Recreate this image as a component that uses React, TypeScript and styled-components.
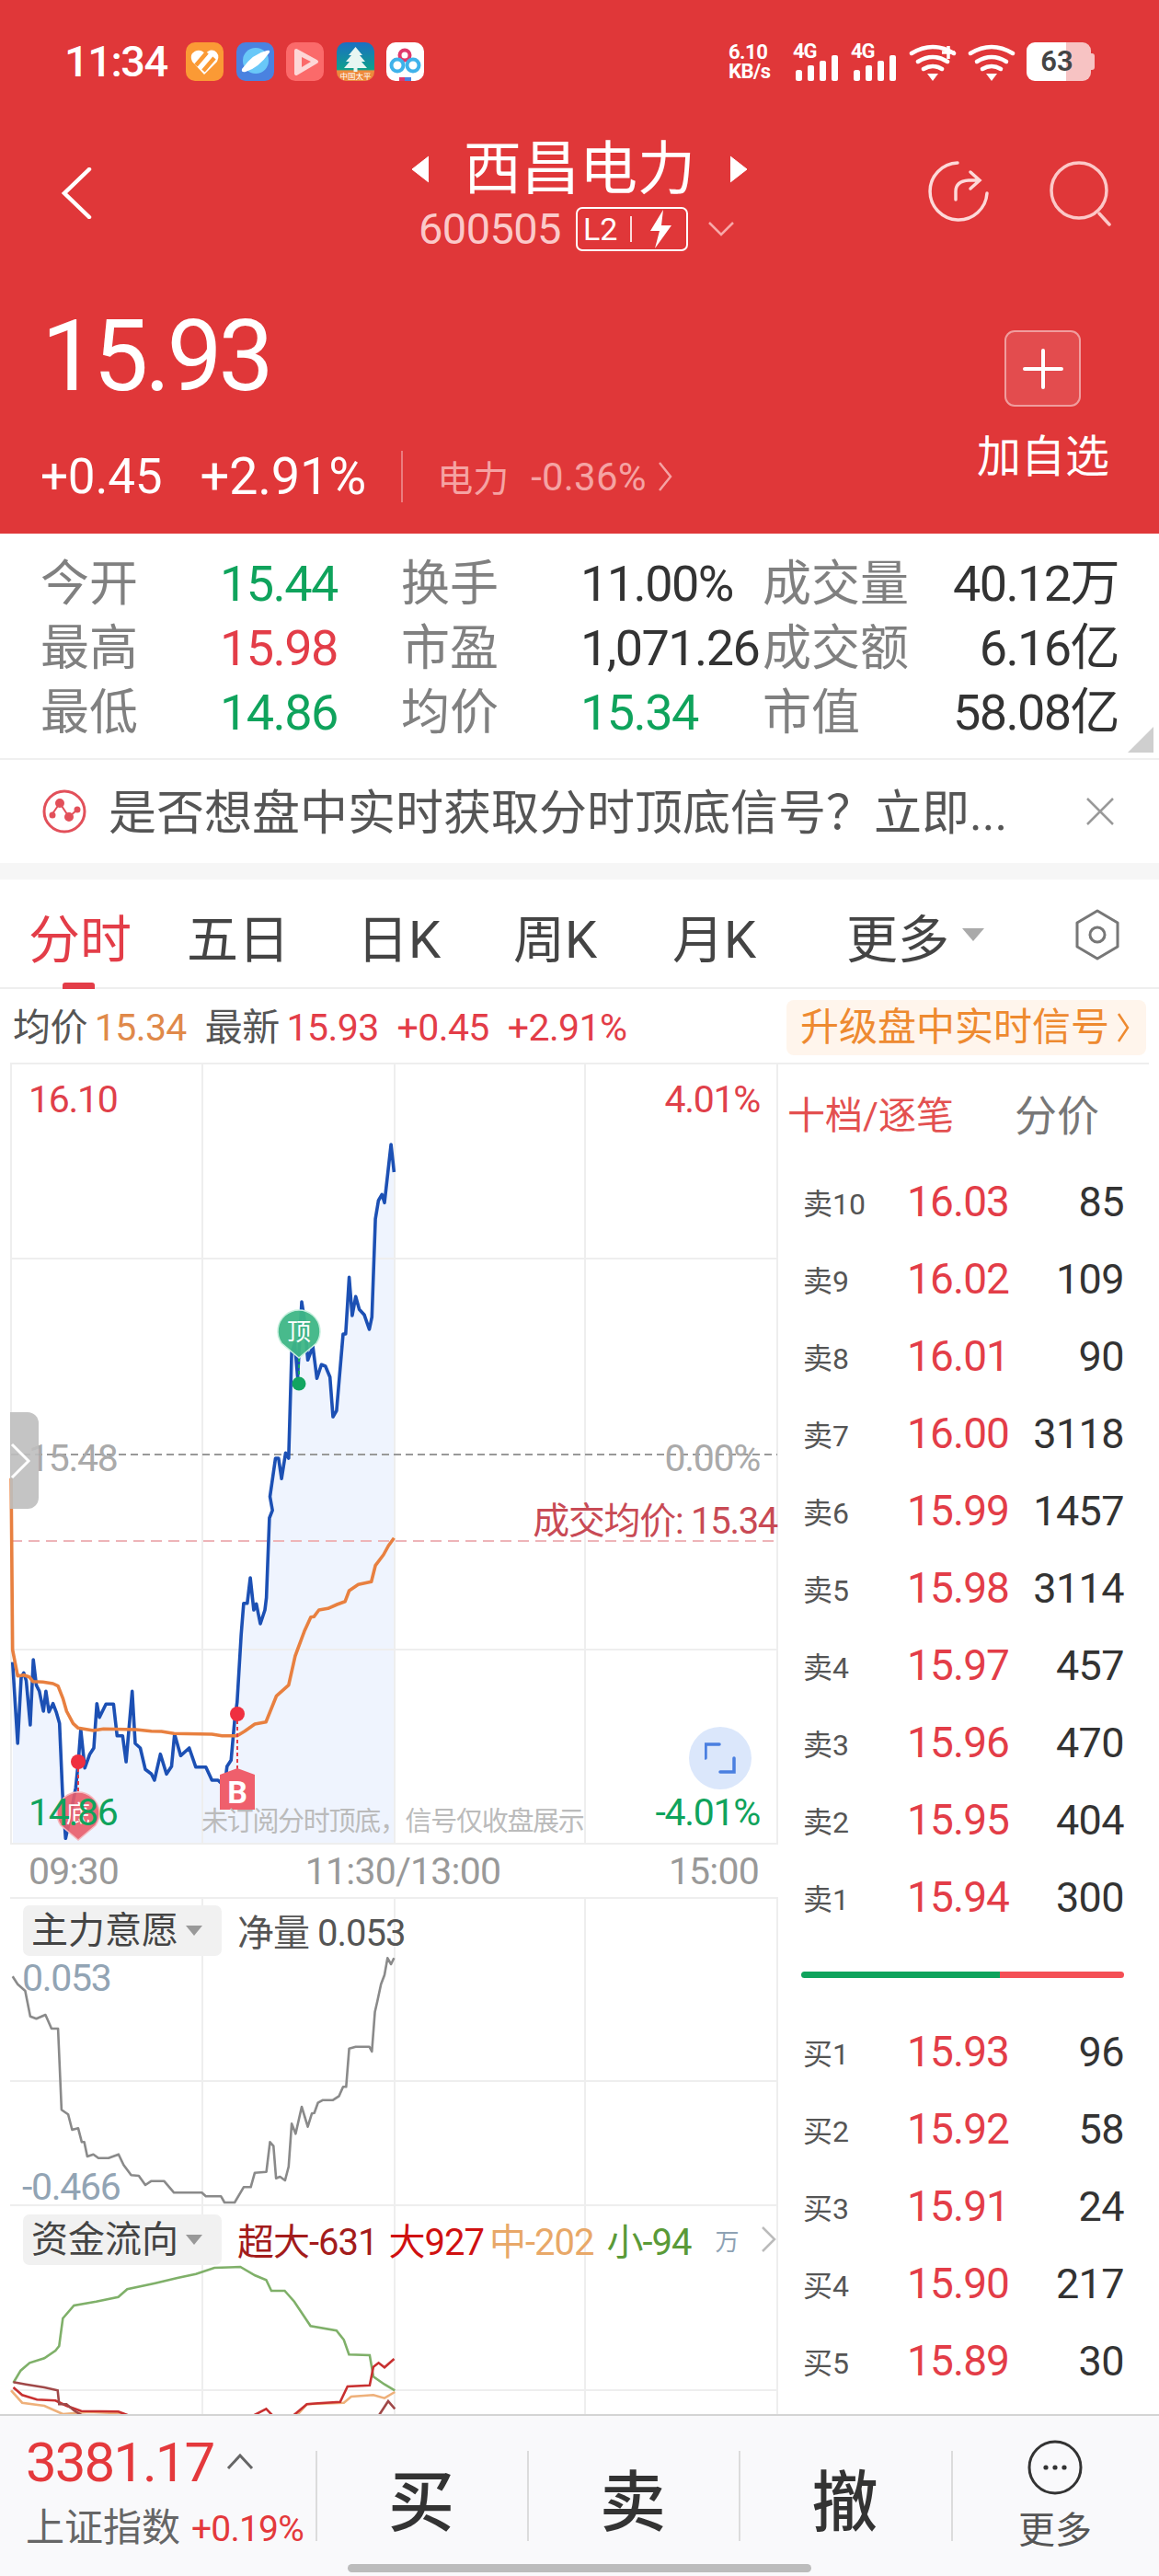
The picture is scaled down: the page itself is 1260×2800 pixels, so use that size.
import React from 'react';
import styled, { createGlobalStyle } from 'styled-components';

const FONT = `Roboto, "Noto Sans CJK SC", sans-serif`;
const RED = '#e33d48';
const GREEN = '#0fa35c';

const GlobalStyle = createGlobalStyle`
  html, body { margin: 0; padding: 0; background: #fff; }
  * { box-sizing: border-box; }
`;

const Page = styled.div`
  width: 1260px;
  height: 2800px;
  overflow: hidden;
  background: #fff;
  font-family: ${FONT};
`;

/* ---------- red header ---------- */
const Header = styled.header`
  height: 580px;
  background: #e03739;
  color: #fff;
`;

const StatusBar = styled.div`
  height: 130px;
  padding: 46px 74px 0 70px;
  display: flex;
  align-items: flex-start;
`;

const Clock = styled.div`
  width: 132px;
  font-size: 47px;
  line-height: 42px;
  letter-spacing: -1.5px;
  font-weight: 500;
`;

const AppIcons = styled.div`
  display: flex;
  gap: 13.5px;
`;

const AppIcon = styled.div<{ $bg: string }>`
  width: 41px;
  height: 42px;
  border-radius: 10px;
  overflow: hidden;
  background: ${(p) => p.$bg};
  svg { display: block; }
`;

const StatusRight = styled.div`
  margin-left: auto;
  display: flex;
  align-items: flex-start;
`;

const NetSpeed = styled.div`
  width: 70px;
  font-size: 22px;
  line-height: 21px;
  font-weight: 700;
  letter-spacing: -0.5px;
`;

const SignalGroup = styled.div`
  position: relative;
  width: 63px;
  height: 42px;
  svg { display: block; }
`;

const NetType = styled.span`
  position: absolute;
  left: 0;
  top: 0;
  font-size: 22px;
  line-height: 20px;
  font-weight: 700;
  letter-spacing: -1px;
`;

const Battery = styled.div`
  width: 70px;
  height: 42px;
  border-radius: 9px;
  background: linear-gradient(90deg, #fff 0 62%, #f7c3c3 62% 100%);
  color: #444;
  font-size: 31px;
  line-height: 42px;
  font-weight: 600;
  text-align: center;
  padding-right: 4px;
  position: relative;
  &::after {
    content: '';
    position: absolute;
    right: -4px;
    top: 12px;
    width: 4px;
    height: 18px;
    border-radius: 0 3px 3px 0;
    background: #f7c3c3;
  }
`;

const NavRow = styled.div`
  height: 170px;
  padding-top: 19px;
  display: grid;
  grid-template-columns: 1fr auto 1fr;
`;

const NavLeft = styled.div`
  padding: 33px 0 0 66px;
`;

const NavRight = styled.div`
  padding: 25px 48px 0 0;
  display: flex;
  justify-content: flex-end;
  gap: 63px;
  align-items: flex-start;
`;

const NavCenter = styled.div`
  display: flex;
  flex-direction: column;
  align-items: center;
`;

const TitleRow = styled.div`
  display: flex;
  align-items: center;
  gap: 38px;
  height: 70px;
`;

const Title = styled.div`
  font-size: 63px;
  line-height: 70px;
`;

const SubRow = styled.div`
  margin: 6px 7px 0 0;
  display: flex;
  align-items: center;
  height: 48px;
`;

const Code = styled.div`
  font-size: 47px;
  line-height: 48px;
  letter-spacing: -0.6px;
  color: #fbc9c9;
`;

const Badge = styled.div`
  margin-left: 16px;
  width: 122px;
  height: 48px;
  border: 2px solid #fff;
  border-radius: 7px;
  display: flex;
  align-items: center;
  padding-left: 6px;
  font-size: 34px;
  line-height: 1;
`;

const BadgeRule = styled.span`
  width: 2px;
  height: 28px;
  margin: 0 18px 0 14px;
  background: #fbdcdc;
`;

const QuoteRow = styled.div`
  height: 280px;
  padding: 0 54px 0 44px;
  display: flex;
  justify-content: space-between;
`;

const Price = styled.div`
  margin: 34px 0 0 1px;
  font-size: 107px;
  line-height: 107px;
  letter-spacing: -4px;
`;

const ChangeRow = styled.div`
  margin-top: 47px;
  height: 60px;
  display: flex;
  align-items: center;
`;

const Change = styled.span<{ $size: number }>`
  font-size: ${(p) => p.$size}px;
  line-height: 60px;
  margin-right: 41px;
  letter-spacing: -0.2px;
`;

const ChangeRule = styled.span`
  width: 2px;
  height: 56px;
  background: rgba(255, 255, 255, 0.35);
  margin: 0 37px 0 -3px;
`;

const Sector = styled.span`
  color: #f5a3a3;
  font-size: 39px;
  margin-right: 24px;
  margin-bottom: 2px;
`;

const SectorPct = styled.span`
  color: #f5a3a3;
  font-size: 42px;
  letter-spacing: 0.2px;
  margin-right: 12px;
`;

const AddColumn = styled.div`
  display: flex;
  flex-direction: column;
  align-items: center;
  padding-top: 59px;
`;

const AddButton = styled.div`
  width: 83px;
  height: 83px;
  border-radius: 11px;
  background: rgba(255, 255, 255, 0.11);
  border: 2px solid rgba(255, 255, 255, 0.45);
  display: flex;
  align-items: center;
  justify-content: center;
`;

const AddLabel = styled.div`
  margin-top: 25px;
  font-size: 48px;
  line-height: 60px;
`;

/* ---------- stats ---------- */
const Stats = styled.section`
  position: relative;
  height: 246px;
  padding: 20px 44px 0 44px;
  border-bottom: 2px solid #f0f0f0;
  display: grid;
  grid-template-columns: 195px 197px 195px 198px 170px 1fr;
  grid-auto-rows: 70px;
  align-items: center;
`;

const StatLabel = styled.div`
  font-size: 53px;
  line-height: 70px;
  color: #808080;
  white-space: nowrap;
`;

const StatValue = styled.div<{ $color?: string; $right?: boolean }>`
  font-size: 54px;
  line-height: 70px;
  letter-spacing: -1.6px;
  white-space: nowrap;
  color: ${(p) => p.$color || '#333'};
  text-align: ${(p) => (p.$right ? 'right' : 'left')};
`;

const CornerMark = styled.div`
  position: absolute;
  right: 6px;
  bottom: 6px;
  width: 0;
  height: 0;
  border-style: solid;
  border-width: 0 0 28px 28px;
  border-color: transparent transparent #cfcfcf transparent;
`;

/* ---------- banner ---------- */
const Banner = styled.section`
  height: 112px;
  padding: 0 46px;
  display: flex;
  align-items: center;
`;

const BannerText = styled.div`
  margin: 5px 0 0 24px;
  font-size: 52px;
  line-height: 60px;
  color: #555;
  white-space: nowrap;
`;

const BannerClose = styled.div`
  margin-left: auto;
  margin-right: 2px;
  display: flex;
`;

const Band = styled.div`
  height: 18px;
  background: #f6f6f6;
`;

/* ---------- tabs ---------- */
const Tabs = styled.nav`
  height: 119px;
  padding-left: 31px;
  padding-right: 42px;
  border-bottom: 2px solid #eee;
  display: grid;
  grid-template-columns: 172px 185px 170px 173px 189px 1fr auto;
  align-items: center;
`;

const Tab = styled.div<{ $active?: boolean }>`
  position: relative;
  font-size: 56px;
  height: 119px;
  padding-top: 1px;
  color: ${(p) => (p.$active ? RED : '#444')};
  display: flex;
  align-items: center;
  &::after {
    content: '';
    display: ${(p) => (p.$active ? 'block' : 'none')};
    position: absolute;
    left: 37px;
    bottom: 0;
    width: 35px;
    height: 7px;
    border-radius: 3px 3px 0 0;
    background: ${RED};
  }
`;

const TabCaret = styled.span`
  margin-left: 14px;
  width: 0;
  height: 0;
  border-style: solid;
  border-width: 14px 12px 0 12px;
  border-color: #aaa transparent transparent transparent;
`;

/* ---------- info row ---------- */
const InfoRow = styled.div`
  height: 80px;
  padding: 4px 14px 0 14px;
  display: flex;
  align-items: center;
  gap: 20px;
`;

const InfoPair = styled.div`
  display: flex;
  gap: 8px;
`;

const InfoText = styled.span<{ $color?: string }>`
  font-size: 41px;
  line-height: 58px;
  letter-spacing: -0.6px;
  color: ${(p) => p.$color || '#555'};
`;

const UpgradePill = styled.div`
  margin-left: auto;
  width: 391px;
  height: 60px;
  border-radius: 8px;
  background: #fff5ec;
  color: #ee8a30;
  font-size: 42px;
  line-height: 60px;
  padding-left: 15px;
  display: flex;
  align-items: center;
  gap: 8px;
  white-space: nowrap;
`;

/* ---------- chart + order book ---------- */
const TopRule = styled.div`
  height: 2px;
  margin: 0 11px;
  background: #eee;
`;

const Body = styled.div`
  height: 1467px;
  display: flex;
  overflow: hidden;
`;

const ChartColumn = styled.div`
  width: 848px;
  flex: none;
`;

const ChartPane = styled.div<{ $h: number }>`
  position: relative;
  height: ${(p) => p.$h}px;
  overflow: hidden;
  > svg { position: absolute; inset: 0; display: block; }
`;

const AxisLabel = styled.div<{ $x?: number; $rx?: number; $y: number; $color: string; $size?: number }>`
  position: absolute;
  ${(p) => (p.$x !== undefined ? `left: ${p.$x}px;` : `right: ${p.$rx}px;`)}
  top: ${(p) => p.$y}px;
  transform: translateY(-50%);
  font-size: ${(p) => p.$size || 41}px;
  line-height: 1;
  letter-spacing: -1.3px;
  white-space: nowrap;
  color: ${(p) => p.$color};
`;

const Handle = styled.div`
  position: absolute;
  left: 11px;
  top: 378px;
  width: 31px;
  height: 105px;
  border-radius: 0 12px 12px 0;
  background: rgba(190, 190, 190, 0.9);
  display: flex;
  align-items: center;
`;

const ExpandButton = styled.div`
  position: absolute;
  left: 749px;
  top: 720px;
  width: 68px;
  height: 68px;
  border-radius: 50%;
  background: #dbe7fb;
  display: flex;
  align-items: center;
  justify-content: center;
`;

const TimeAxis = styled.div`
  height: 56px;
  padding: 0 23px 0 31px;
  display: flex;
  justify-content: space-between;
  align-items: center;
  font-size: 41px;
  letter-spacing: -0.8px;
  color: #999;
`;

const MidTime = styled.span`
  margin-left: 20px;
`;

const PaneHead = styled.div`
  position: relative;
  display: flex;
  align-items: center;
  padding: 7px 0 0 25px;
  white-space: nowrap;
`;

const PaneTag = styled.div`
  width: 216px;
  height: 55px;
  border-radius: 7px;
  background: #f1f1f1;
  color: #444;
  font-size: 40px;
  line-height: 55px;
  padding-left: 9px;
  display: flex;
  align-items: center;
  flex: none;
`;

const TagCaret = styled.span`
  margin-left: 8px;
  width: 0;
  height: 0;
  border-style: solid;
  border-width: 11px 9px 0 9px;
  border-color: #999 transparent transparent transparent;
`;

const PaneValue = styled.span<{ $color: string; $gap?: number }>`
  margin-left: ${(p) => p.$gap ?? 0}px;
  font-size: 40px;
  letter-spacing: -1px;
  color: ${(p) => p.$color};
`;

const UnitMark = styled.span`
  margin-left: 26px;
  font-size: 26px;
  color: #8ea2b4;
`;

const OrderBook = styled.aside`
  flex: 1;
  padding-right: 38px;
`;

const BookHead = styled.div`
  height: 107px;
  padding: 4px 0 0 8px;
  display: flex;
  align-items: center;
`;

const BookTabOn = styled.div`
  font-size: 41px;
  line-height: 54px;
  color: #e35050;
  width: 247px;
  white-space: nowrap;
`;

const BookTabOff = styled.div`
  font-size: 46px;
  line-height: 54px;
  color: #777;
`;

const BookRow = styled.div`
  height: 84px;
  padding-left: 25px;
  display: grid;
  grid-template-columns: 113px 1fr auto;
  align-items: center;
`;

const BookLevel = styled.div`
  font-size: 32px;
  color: #555;
  white-space: nowrap;
`;

const BookPrice = styled.div`
  font-size: 46px;
  letter-spacing: -0.9px;
  color: ${RED};
`;

const BookVol = styled.div`
  font-size: 45px;
  letter-spacing: -0.6px;
  color: #333;
  text-align: right;
`;

const BalanceBar = styled.div`
  margin: 39px 0 38px 23px;
  height: 7px;
  border-radius: 4px;
  background: linear-gradient(90deg, ${GREEN} 0 61.5%, #f44f55 61.5% 100%);
`;

/* ---------- bottom bar ---------- */
const BottomBar = styled.footer`
  position: relative;
  height: 176px;
  background: #f9f9fb;
  border-top: 2px solid #d4d4d4;
  display: flex;
`;

const IndexBlock = styled.div`
  width: 343px;
  padding: 20px 0 0 28px;
  flex: none;
`;

const IndexTop = styled.div`
  display: flex;
  align-items: center;
  height: 60px;
  color: #e4393c;
  font-size: 60px;
  letter-spacing: -2px;
`;

const IndexBottom = styled.div`
  display: flex;
  align-items: baseline;
  margin-top: 17px;
  white-space: nowrap;
`;

const IndexName = styled.span`
  font-size: 42px;
  line-height: 50px;
  color: #666;
`;

const IndexPct = styled.span`
  margin-left: 12px;
  font-size: 39px;
  letter-spacing: -0.8px;
  color: #e4393c;
`;

const Action = styled.div<{ $w: number }>`
  position: relative;
  width: ${(p) => p.$w}px;
  flex: none;
  display: flex;
  flex-direction: column;
  align-items: center;
  justify-content: center;
  height: 174px;
  font-size: 72px;
  font-weight: 500;
  color: #333;
  &::before {
    content: '';
    position: absolute;
    left: 0;
    top: 38px;
    width: 2px;
    height: 98px;
    background: #dcdcdc;
  }
`;

const MoreLabel = styled.div`
  margin-top: 16px;
  font-size: 40px;
  line-height: 46px;
  font-weight: 400;
  color: #555;
`;

const HomeBar = styled.div`
  position: absolute;
  left: 378px;
  bottom: 4px;
  width: 504px;
  height: 9px;
  border-radius: 5px;
  background: #bcbcbc;
`;

/* ---------- chart data (read from the picture) ---------- */
type Pt = [number, number];

const toPts = (data: Pt[], xs: number, y0: number, ys: number): Pt[] =>
  data.map(([x, y]) => [+(x / xs).toFixed(1), +(y0 + y / ys).toFixed(1)]);
const str = (data: Pt[]) => data.map((p) => p.join(',')).join(' ');

const BLUE = [
  ...toPts([[25,470],[35,735],[42,520],[47,505],[52,530],[60,675],[66,462],[72,545],[78,565],[86,630],[91,565],[97,632],[105,605],[112,635],[118,670],[124,900],[130,1045],[136,1000],[150,880],[155,800],[160,690],[168,815],[178,770],[186,750],[192,605],[197,650],[210,607],[225,607],[232,710],[243,710],[250,795],[262,565],[268,735],[278,750],[288,820],[300,835],[306,855],[318,770],[330,835],[340,810],[346,705],[358,775],[375,750],[388,812],[408,812],[420,855],[432,855],[445,875],[450,810],[458,790],[465,660],[470,600],[478,380],[483,278],[490,278],[496,195],[503,300],[508,280],[516,345],[525,300],[528,260]], 1.823, 1650, 3),
  ...toPts([[534,1500],[540,1475],[535,1430],[546,1305],[552,1305],[558,1372],[566,1288],[572,1305],[578,960],[584,930],[590,1040],[598,795],[603,850],[610,985],[620,940],[628,1045],[637,1000],[645,1005],[654,1040],[660,1170],[667,1150],[680,900],[685,900],[692,715],[698,840],[705,778],[712,820],[722,838],[732,885],[737,845],[744,525],[750,465],[757,445],[762,472],[775,282],[781,372]], 1.823, 1150, 3),
];

const ORANGE = toPts([[22,-130],[25,430],[35,515],[47,512],[58,518],[65,533],[85,535],[105,540],[115,548],[125,590],[132,630],[145,670],[155,685],[185,693],[205,688],[270,690],[300,695],[320,696],[345,703],[420,705],[440,710],[470,710],[485,695],[505,672],[527,665],[548,580],[572,545],[585,450],[603,370],[616,323],[622,322],[632,300],[650,295],[668,282],[684,272],[692,237],[710,217],[736,208],[744,155],[760,120],[770,90],[781,65]], 1.823, 1650, 3);

const WILL = toPts([[25,295],[35,320],[50,342],[60,425],[72,433],[90,420],[102,465],[115,465],[122,730],[135,745],[143,795],[155,790],[162,835],[167,835],[173,882],[185,875],[195,887],[215,887],[235,875],[245,910],[260,943],[275,945],[288,975],[300,962],[325,962],[345,1000],[400,1000],[408,1012],[438,1012],[445,1032],[465,1032],[483,982],[497,982],[505,935],[528,932],[535,835],[542,848],[547,953],[555,948],[565,960],[572,915],[578,775],[586,808],[598,720],[610,785],[618,742],[623,740],[630,707],[640,698],[660,698],[672,685],[680,655],[686,655],[692,530],[705,524],[732,524],[737,540],[743,410],[748,375],[755,320],[762,290],[768,235],[775,255],[781,235]], 1.823, 2050, 3);

const FLOW_GREEN = toPts([[18,420],[28,380],[40,355],[60,340],[75,315],[80,300],[85,210],[100,168],[130,155],[160,140],[172,115],[210,95],[240,78],[265,65],[290,45],[325,42],[345,70],[360,85],[367,120],[385,120],[398,155],[420,235],[455,250],[465,280],[472,328],[500,330],[505,400],[520,425],[534,445]], 1.244, 2450, 3);
const FLOW_DARK = toPts([[18,418],[35,425],[60,435],[78,445],[80,490],[90,490],[100,510],[120,540]], 1.244, 2450, 3);
const FLOW_DARK_R = toPts([[510,535],[525,480],[534,505]], 1.244, 2450, 3);
const FLOW_RED = toPts([[18,435],[30,460],[50,475],[75,478],[90,495],[110,512],[160,514],[178,530]], 1.244, 2450, 3);
const FLOW_RED_R = toPts([[340,530],[360,505],[370,530],[395,530],[415,490],[430,487],[460,482],[470,432],[500,428],[505,368],[512,355],[520,370],[533,342]], 1.244, 2450, 3);
const FLOW_ORANGE = toPts([[15,445],[30,485],[60,495],[85,522],[120,515],[165,520],[180,535]], 1.244, 2450, 3);
const FLOW_ORANGE_R = toPts([[400,530],[415,490],[465,485],[475,465],[505,460],[520,470],[534,450]], 1.244, 2450, 3);

const GRID = '#eeeeee';
const VERT = [12, 220, 429, 636, 845];

const ASKS: [string, string, string][] = [
  ['卖10', '16.03', '85'],
  ['卖9', '16.02', '109'],
  ['卖8', '16.01', '90'],
  ['卖7', '16.00', '3118'],
  ['卖6', '15.99', '1457'],
  ['卖5', '15.98', '3114'],
  ['卖4', '15.97', '457'],
  ['卖3', '15.96', '470'],
  ['卖2', '15.95', '404'],
  ['卖1', '15.94', '300'],
];

const BIDS: [string, string, string][] = [
  ['买1', '15.93', '96'],
  ['买2', '15.92', '58'],
  ['买3', '15.91', '24'],
  ['买4', '15.90', '217'],
  ['买5', '15.89', '30'],
];

/* ---------- small drawings ---------- */
function Signal() {
  return (
    <SignalGroup>
      <NetType>4G</NetType>
      <svg width="63" height="42" viewBox="0 0 63 42">
        <rect x="3" y="30" width="7" height="12" rx="2.5" fill="#fff" />
        <rect x="16" y="25" width="7" height="17" rx="2" fill="#fff" />
        <rect x="29" y="20" width="7" height="22" rx="2" fill="#fff" />
        <rect x="42" y="14" width="7" height="28" rx="2" fill="#fff" />
      </svg>
    </SignalGroup>
  );
}

function Wifi({ plus }: { plus?: boolean }) {
  return (
    <svg width="64" height="42" viewBox="0 0 64 42" fill="none" stroke="#fff" strokeWidth="4.5" strokeLinecap="round">
      <path d="M3 12 Q26 -2 49 12" />
      <path d="M10 21 Q26 11 42 21" />
      <path d="M16 29 Q26 23 36 29" />
      <path d="M20 34 H32 L26 42 Z" fill="#fff" stroke="none" />
      {plus && <path d="M36 11 H50 M43 4 V18" strokeLinecap="butt" strokeWidth="3.5" />}
    </svg>
  );
}

function Pin({ x, y, fill, stroke, label }: { x: number; y: number; fill: string; stroke: string; label: string }) {
  return (
    <g>
      <path
        d={`M${x} ${y + 28} L${x - 19} ${y + 12} A23 23 0 1 1 ${x + 19} ${y + 12} Z`}
        fill={fill}
        stroke={stroke}
        strokeWidth="1.5"
      />
      <text x={x} y={y + 9} textAnchor="middle" fontSize="26" fill="#fff" fontFamily={FONT}>{label}</text>
    </g>
  );
}

export default function App() {
  return (
    <Page>
      <GlobalStyle />
      <Header>
        <StatusBar>
          <Clock>11:34</Clock>
          <AppIcons>
            <AppIcon $bg="#fb9a35">
              <svg width="41" height="42" viewBox="0 0 41 42" fill="none">
                <path d="M20 35 L7 21 Q3 12 12 9 Q18 8 21 13 Q25 7 31 9 Q38 13 34 21 Z" fill="#fff" />
                <path d="M11 25 L23 11 M19 31 L31 17" stroke="#fb9a35" strokeWidth="4.5" />
              </svg>
            </AppIcon>
            <AppIcon $bg="#4a82e0">
              <svg width="41" height="42" viewBox="0 0 41 42">
                <circle cx="21" cy="20" r="14" fill="#69c8f8" />
                <path d="M6 29 Q5 33 10 32 Q24 28 36 11 Q37 8 33 9 Q18 12 6 29 Z" fill="#fff" />
              </svg>
            </AppIcon>
            <AppIcon $bg="#fb6a6a">
              <svg width="41" height="42" viewBox="0 0 41 42">
                <path d="M11 9 L33 21 L11 34 Z" fill="#fdd7d7" stroke="#fdd7d7" strokeWidth="4" strokeLinejoin="round" />
                <path d="M17 16 L27 21 L17 27 Z" fill="#fb6a6a" />
              </svg>
            </AppIcon>
            <AppIcon $bg="linear-gradient(180deg,#1b6fc4 0%,#0fa08c 70%,#ee8a3c 74%)">
              <svg width="41" height="42" viewBox="0 0 41 42">
                <path d="M20.5 5 L28 14 L25 14 L31 21 L27 21 L33 28 L8 28 L14 21 L10 21 L16 14 L13 14 Z" fill="#e8f6f2" />
                <rect x="18.5" y="27" width="4" height="5" fill="#e8f6f2" />
                <text x="20.5" y="40" textAnchor="middle" fontSize="8.5" fill="#fff" fontFamily={FONT}>中国太平</text>
              </svg>
            </AppIcon>
            <AppIcon $bg="#fff">
              <svg width="41" height="42" viewBox="0 0 41 42" fill="none" strokeWidth="4">
                <circle cx="20" cy="14" r="5.5" stroke="#e0396b" />
                <circle cx="12" cy="25" r="6.5" stroke="#3fb2ea" />
                <circle cx="29" cy="25" r="6.5" stroke="#3fb2ea" />
                <path d="M14 40 H20" stroke="#e0396b" />
                <path d="M20 40 H27" stroke="#4a82e0" />
              </svg>
            </AppIcon>
          </AppIcons>
          <StatusRight>
            <NetSpeed>6.10<br />KB/s</NetSpeed>
            <Signal />
            <Signal />
            <Wifi plus />
            <Wifi />
            <Battery>63</Battery>
          </StatusRight>
        </StatusBar>

        <NavRow>
          <NavLeft>
            <svg width="34" height="56" viewBox="0 0 34 56" fill="none" stroke="#fff" strokeWidth="4.5" strokeLinecap="round">
              <path d="M31 2 L4 28 L31 54" />
            </svg>
          </NavLeft>
          <NavCenter>
            <TitleRow>
              <svg width="20" height="30" viewBox="0 0 20 30"><path d="M20 1 L2 15 L20 29 Z" fill="#fff" stroke="#fff" strokeLinejoin="round" /></svg>
              <Title>西昌电力</Title>
              <svg width="20" height="30" viewBox="0 0 20 30"><path d="M0 1 L18 15 L0 29 Z" fill="#fff" stroke="#fff" strokeLinejoin="round" /></svg>
            </TitleRow>
            <SubRow>
              <Code>600505</Code>
              <Badge>
                L2
                <BadgeRule />
                <svg width="26" height="42" viewBox="0 0 26 42"><path d="M16 0 L2 23 L12 23 L7 42 L25 17 L14 17 Z" fill="#fff" /></svg>
              </Badge>
              <svg style={{ marginLeft: 22 }} width="28" height="16" viewBox="0 0 28 16" fill="none" stroke="#f8a8a8" strokeWidth="2.5">
                <path d="M1 1 L14 14 L27 1" />
              </svg>
            </SubRow>
          </NavCenter>
          <NavRight>
            <svg width="70" height="70" viewBox="0 0 70 70" fill="none" stroke="#fdd9d9" strokeWidth="3.5" strokeLinecap="round">
              <path d="M34 3 A31 31 0 1 0 66 36" />
              <path d="M32 43 V34 Q32 23 46 22 H56 M48 13 L58 22 L48 31" strokeWidth="3.5" />
            </svg>
            <svg width="72" height="72" viewBox="0 0 72 72" fill="none" stroke="#fcc8c8" strokeWidth="3.5" strokeLinecap="round">
              <circle cx="33" cy="33" r="30" />
              <path d="M55 58 L66 70" />
            </svg>
          </NavRight>
        </NavRow>

        <QuoteRow>
          <div>
            <Price>15.93</Price>
            <ChangeRow>
              <Change $size={53}>+0.45</Change>
              <Change $size={56}>+2.91%</Change>
              <ChangeRule />
              <Sector>电力</Sector>
              <SectorPct>-0.36%</SectorPct>
              <svg width="16" height="34" viewBox="0 0 16 34" fill="none" stroke="#f5a3a3" strokeWidth="2.5">
                <path d="M2 2 L14 17 L2 32" />
              </svg>
            </ChangeRow>
          </div>
          <AddColumn>
            <AddButton>
              <svg width="44" height="44" viewBox="0 0 44 44" stroke="#fff" strokeWidth="4" strokeLinecap="round">
                <path d="M2 22 H42 M22 2 V42" />
              </svg>
            </AddButton>
            <AddLabel>加自选</AddLabel>
          </AddColumn>
        </QuoteRow>
      </Header>

      <Stats>
        <StatLabel>今开</StatLabel>
        <StatValue $color={GREEN}>15.44</StatValue>
        <StatLabel>换手</StatLabel>
        <StatValue>11.00%</StatValue>
        <StatLabel>成交量</StatLabel>
        <StatValue $right>40.12万</StatValue>
        <StatLabel>最高</StatLabel>
        <StatValue $color={RED}>15.98</StatValue>
        <StatLabel>市盈</StatLabel>
        <StatValue>1,071.26</StatValue>
        <StatLabel>成交额</StatLabel>
        <StatValue $right>6.16亿</StatValue>
        <StatLabel>最低</StatLabel>
        <StatValue $color={GREEN}>14.86</StatValue>
        <StatLabel>均价</StatLabel>
        <StatValue $color={GREEN}>15.34</StatValue>
        <StatLabel>市值</StatLabel>
        <StatValue $right>58.08亿</StatValue>
        <CornerMark />
      </Stats>

      <Banner>
        <svg width="48" height="48" viewBox="0 0 48 48" fill="none" stroke="#e2505a" strokeWidth="3">
          <circle cx="24" cy="24" r="22" />
          <path d="M10 28 L19 15 L29 30 L38 22" strokeWidth="2" />
          <circle cx="19" cy="15" r="3.5" fill="#e2505a" />
          <circle cx="29" cy="30" r="3.5" fill="#e2505a" />
          <circle cx="11" cy="28" r="2" fill="#e2505a" />
          <circle cx="38" cy="22" r="2" fill="#e2505a" />
        </svg>
        <BannerText>是否想盘中实时获取分时顶底信号？立即...</BannerText>
        <BannerClose>
          <svg width="32" height="32" viewBox="0 0 32 32" stroke="#999" strokeWidth="2.5">
            <path d="M2 2 L30 30 M30 2 L2 30" />
          </svg>
        </BannerClose>
      </Banner>
      <Band />

      <Tabs>
        <Tab $active>分时</Tab>
        <Tab>五日</Tab>
        <Tab>日K</Tab>
        <Tab>周K</Tab>
        <Tab>月K</Tab>
        <Tab>更多<TabCaret /></Tab>
        <svg width="50" height="56" viewBox="0 0 50 56" fill="none" stroke="#777" strokeWidth="3">
          <path d="M25 2 L47 15 V41 L25 54 L3 41 V15 Z" strokeLinejoin="round" />
          <circle cx="25" cy="28" r="8" />
        </svg>
      </Tabs>

      <InfoRow>
        <InfoPair>
          <InfoText>均价</InfoText>
          <InfoText $color="#e0894a">15.34</InfoText>
        </InfoPair>
        <InfoPair>
          <InfoText>最新</InfoText>
          <InfoText $color={RED}>15.93</InfoText>
        </InfoPair>
        <InfoText $color={RED}>+0.45</InfoText>
        <InfoText $color={RED}>+2.91%</InfoText>
        <UpgradePill>
          升级盘中实时信号
          <svg width="14" height="34" viewBox="0 0 14 34" fill="none" stroke="#ee8a30" strokeWidth="2.5">
            <path d="M2 2 L12 17 L2 32" />
          </svg>
        </UpgradePill>
      </InfoRow>

      <TopRule />
      <Body>
        <ChartColumn>
          <ChartPane $h={849}>
            <svg width="848" height="849" viewBox="0 1157 848 849" fill="none">
              <polygon points={`${str(BLUE)} 429,2004 14,2004`} fill="#eff4fe" />
              <g stroke={GRID} strokeWidth="2">
                {VERT.map((x) => <line key={x} x1={x} x2={x} y1="1157" y2="2004" />)}
                <line x1="12" x2="845" y1="1368" y2="1368" />
                <line x1="12" x2="845" y1="1793" y2="1793" />
                <line x1="11" x2="846" y1="2004" y2="2004" />
              </g>
              <line x1="12" x2="845" y1="1581" y2="1581" stroke="#999" strokeWidth="2" strokeDasharray="8 5" />
              <line x1="12" x2="845" y1="1675" y2="1675" stroke="#eeb4b8" strokeWidth="2" strokeDasharray="12 7" />
              <polyline points={str(BLUE)} stroke="#1c50b4" strokeWidth="3.6" strokeLinejoin="round" />
              <polyline points={str(ORANGE)} stroke="#e88040" strokeWidth="3.6" strokeLinejoin="round" />
              <line x1="325" x2="325" y1="1476" y2="1504" stroke="#12a560" strokeWidth="2" strokeDasharray="4 3" />
              <circle cx="325" cy="1504" r="7.5" fill="#12a560" />
              <Pin x={325} y={1448} fill="rgba(62,182,134,0.95)" stroke="#c8f0de" label="顶" />
              <line x1="85" x2="85" y1="1915" y2="1950" stroke="#e33d48" strokeWidth="2" strokeDasharray="4 3" />
              <circle cx="85" cy="1915" r="8" fill="#ef3040" />
              <line x1="258" x2="258" y1="1863" y2="1925" stroke="#e33d48" strokeWidth="2" strokeDasharray="4 3" />
              <circle cx="258" cy="1863" r="8" fill="#ef3040" />
              <path d="M239 1929 L258 1922 L277 1929 V1967 H239 Z" fill="#ef5f6c" />
              <text x="258" y="1960" textAnchor="middle" fontSize="34" fontWeight="700" fill="#fff" fontFamily="Roboto">B</text>
              <Pin x={85} y={1972} fill="rgba(232,92,106,0.9)" stroke="#f5b8be" label="底" />
            </svg>
            <AxisLabel $x={31} $y={38} $color="#e0404a">16.10</AxisLabel>
            <AxisLabel $rx={22} $y={38} $color="#e0404a">4.01%</AxisLabel>
            <AxisLabel $x={31} $y={428} $color="#aaa">15.48</AxisLabel>
            <AxisLabel $rx={22} $y={428} $color="#aaa">0.00%</AxisLabel>
            <AxisLabel $rx={3} $y={497} $color="#c84a55" $size={40}>成交均价: 15.34</AxisLabel>
            <AxisLabel $x={31} $y={813} $color={GREEN}>14.86</AxisLabel>
            <AxisLabel $rx={22} $y={813} $color={GREEN}>-4.01%</AxisLabel>
            <AxisLabel $x={219} $y={823} $color="#bbb" $size={29}>未订阅分时顶底，信号仅收盘展示</AxisLabel>
            <Handle>
              <svg width="24" height="40" viewBox="0 0 24 40" fill="none" stroke="#fff" strokeWidth="3">
                <path d="M2 2 L20 20 L2 38" />
              </svg>
            </Handle>
            <ExpandButton>
              <svg width="34" height="34" viewBox="0 0 34 34" fill="none" stroke="#4a7fe0" strokeWidth="3.5" strokeLinecap="round">
                <path d="M1 17 V2 H16 M32 17 V32 H17" />
              </svg>
            </ExpandButton>
          </ChartPane>

          <TimeAxis>
            <span>09:30</span>
            <MidTime>11:30/13:00</MidTime>
            <span>15:00</span>
          </TimeAxis>

          <ChartPane $h={336}>
            <svg width="848" height="336" viewBox="0 2062 848 336" fill="none">
              <g stroke={GRID} strokeWidth="2">
                {VERT.slice(1).map((x) => <line key={x} x1={x} x2={x} y1="2062" y2="2398" />)}
                <line x1="11" x2="846" y1="2063" y2="2063" />
                <line x1="11" x2="846" y1="2262" y2="2262" />
                <line x1="11" x2="846" y1="2397" y2="2397" />
              </g>
              <polyline points={str(WILL)} stroke="#8a8a8a" strokeWidth="2.6" strokeLinejoin="round" />
            </svg>
            <PaneHead>
              <PaneTag>主力意愿<TagCaret /></PaneTag>
              <PaneValue $gap={17} $color="#555">净量 0.053</PaneValue>
            </PaneHead>
            <AxisLabel $x={24} $y={88} $color="#92a4b4">0.053</AxisLabel>
            <AxisLabel $x={24} $y={315} $color="#92a4b4">-0.466</AxisLabel>
          </ChartPane>

          <ChartPane $h={226}>
            <svg width="848" height="226" viewBox="0 2398 848 226" fill="none">
              <g stroke={GRID} strokeWidth="2">
                {VERT.slice(1).map((x) => <line key={x} x1={x} x2={x} y1="2398" y2="2624" />)}
                <line x1="11" x2="846" y1="2598" y2="2598" />
              </g>
              <polyline points={str(FLOW_GREEN)} stroke="#7fb069" strokeWidth="2.6" />
              <polyline points={str(FLOW_ORANGE)} stroke="#eeb07a" strokeWidth="2.6" />
              <polyline points={str(FLOW_ORANGE_R)} stroke="#eeb07a" strokeWidth="2.6" />
              <polyline points={str(FLOW_RED)} stroke="#c83030" strokeWidth="2.6" />
              <polyline points={str(FLOW_RED_R)} stroke="#c83030" strokeWidth="2.6" />
              <polyline points={str(FLOW_DARK)} stroke="#a04848" strokeWidth="2.6" />
              <polyline points={str(FLOW_DARK_R)} stroke="#a04848" strokeWidth="2.6" />
            </svg>
            <PaneHead>
              <PaneTag>资金流向<TagCaret /></PaneTag>
              <PaneValue $gap={17} $color="#a31c1c">超大-631</PaneValue>
              <PaneValue $gap={12} $color="#d01010">大927</PaneValue>
              <PaneValue $gap={6} $color="#e8a868">中-202</PaneValue>
              <PaneValue $gap={14} $color="#5a9a38">小-94</PaneValue>
              <UnitMark>万</UnitMark>
              <svg style={{ marginLeft: 24 }} width="17" height="30" viewBox="0 0 17 30" fill="none" stroke="#bbb" strokeWidth="2.5">
                <path d="M2 2 L15 15 L2 28" />
              </svg>
            </PaneHead>
          </ChartPane>
        </ChartColumn>

        <OrderBook>
          <BookHead>
            <BookTabOn>十档/逐笔</BookTabOn>
            <BookTabOff>分价</BookTabOff>
          </BookHead>
          {ASKS.map(([level, price, vol]) => (
            <BookRow key={level}>
              <BookLevel>{level}</BookLevel>
              <BookPrice>{price}</BookPrice>
              <BookVol>{vol}</BookVol>
            </BookRow>
          ))}
          <BalanceBar />
          {BIDS.map(([level, price, vol]) => (
            <BookRow key={level}>
              <BookLevel>{level}</BookLevel>
              <BookPrice>{price}</BookPrice>
              <BookVol>{vol}</BookVol>
            </BookRow>
          ))}
        </OrderBook>
      </Body>

      <BottomBar>
        <IndexBlock>
          <IndexTop>
            3381.17
            <svg style={{ marginLeft: 14 }} width="30" height="18" viewBox="0 0 30 18" fill="none" stroke="#666" strokeWidth="3">
              <path d="M2 16 L15 2 L28 16" />
            </svg>
          </IndexTop>
          <IndexBottom>
            <IndexName>上证指数</IndexName>
            <IndexPct>+0.19%</IndexPct>
          </IndexBottom>
        </IndexBlock>
        <Action $w={230}>买</Action>
        <Action $w={230}>卖</Action>
        <Action $w={231}>撤</Action>
        <Action $w={226}>
          <svg width="60" height="60" viewBox="0 0 60 60" fill="none">
            <circle cx="30" cy="30" r="28" stroke="#333" strokeWidth="3" />
            <circle cx="20" cy="30" r="2.6" fill="#333" />
            <circle cx="30" cy="30" r="2.6" fill="#333" />
            <circle cx="40" cy="30" r="2.6" fill="#333" />
          </svg>
          <MoreLabel>更多</MoreLabel>
        </Action>
        <HomeBar />
      </BottomBar>
    </Page>
  );
}
